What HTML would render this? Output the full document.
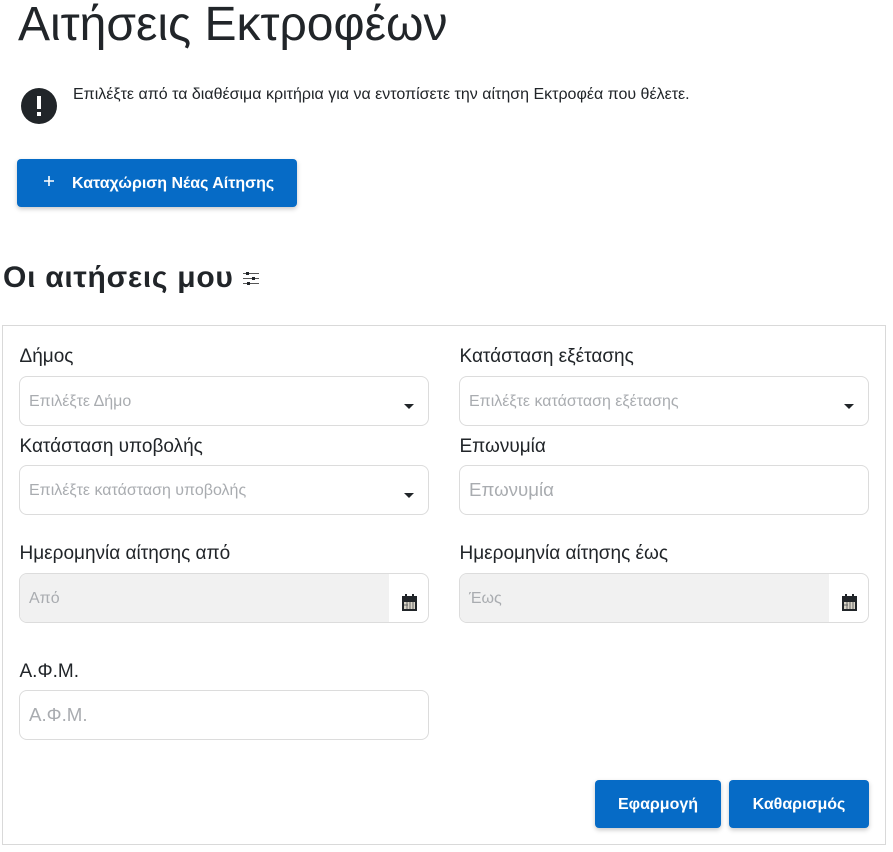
<!DOCTYPE html>
<html lang="el">
<head>
<meta charset="utf-8">
<style>
html,body{margin:0;padding:0;background:#fff;width:893px;height:852px;overflow:hidden}
body{position:relative;font-family:"Liberation Sans",sans-serif;color:#212529}
.a{position:absolute;white-space:nowrap}
.lbl{font-size:19px;line-height:22px;color:#212529;margin-top:1px}
.box{position:absolute;box-sizing:border-box;width:410px;height:50px;border:1px solid #dcdcdc;border-radius:8px;background:#fff;overflow:hidden}
.ph{position:absolute;white-space:nowrap;color:#a9acb0;line-height:20px}
.s{font-size:16px;top:15px}
.b{font-size:18.7px;top:14px}
.btn{position:absolute;background:#066bc6;border-radius:4px;color:#fff;font-weight:700;font-size:16px;text-align:center;box-shadow:0 2px 5px rgba(0,0,0,.22);height:48px;line-height:50px}
.car{position:absolute;width:0;height:0;border-left:5px solid transparent;border-right:5px solid transparent;border-top:5px solid #212529}
.gray{position:absolute;left:0;top:0;bottom:0;width:369px;background:#f1f1f1}
</style>
</head>
<body>
<div class="a" style="left:18px;top:-5px;font-size:48px;line-height:60px;color:#212529">Αιτήσεις Εκτροφέων</div>

<svg class="a" style="left:20px;top:87px" width="38" height="38" viewBox="0 0 38 38"><circle cx="19" cy="19" r="18" fill="#212529"/><rect x="17" y="9" width="4" height="13" fill="#fff"/><rect x="17" y="25" width="4" height="4" fill="#fff"/></svg>
<div class="a" style="left:73px;top:85px;font-size:16px;line-height:20px;color:#212529">Επιλέξτε από τα διαθέσιμα κριτήρια για να εντοπίσετε την αίτηση Εκτροφέα που θέλετε.</div>

<div class="btn" style="left:17px;top:159px;width:280px"></div>
<svg class="a" style="left:43px;top:175px" width="12" height="12" viewBox="0 0 12 12"><path d="M6 1v10M1 6h10" stroke="#fff" stroke-width="1.6" fill="none"/></svg>
<div class="a" style="left:72px;top:174px;font-size:16px;line-height:20px;font-weight:700;color:#fff">Καταχώριση Νέας Αίτησης</div>

<div class="a" style="left:3px;top:260px;font-size:30px;line-height:36px;font-weight:700;color:#212529;letter-spacing:.73px">Οι αιτήσεις μου</div>
<svg class="a" style="left:243px;top:272px" width="16" height="14" viewBox="0 0 16 14"><path d="M0 1.500h16M0 6.500h16M0 11.500h16" stroke="#555" stroke-width="1" fill="none"/><rect x="3" y="0" width="3" height="3" fill="#212529"/><rect x="9" y="5" width="3" height="3" fill="#212529"/><rect x="4" y="10" width="3" height="3" fill="#212529"/></svg>

<div style="position:absolute;left:2px;top:325px;width:884px;height:520px;box-sizing:border-box;border:1px solid #d9d9d9"></div>

<div class="a lbl" style="left:19.500px;top:345px">Δήμος</div>
<div class="box" style="left:19px;top:376px"><div class="ph s" style="left:9px">Επιλέξτε Δήμο</div><div class="car" style="left:384px;top:27px"></div></div>

<div class="a lbl" style="left:459.500px;top:345px">Κατάσταση εξέτασης</div>
<div class="box" style="left:459px;top:376px"><div class="ph s" style="left:9px">Επιλέξτε κατάσταση εξέτασης</div><div class="car" style="left:384px;top:27px"></div></div>

<div class="a lbl" style="left:19.500px;top:435px">Κατάσταση υποβολής</div>
<div class="box" style="left:19px;top:465px"><div class="ph s" style="left:9px">Επιλέξτε κατάσταση υποβολής</div><div class="car" style="left:384px;top:27px"></div></div>

<div class="a lbl" style="left:459.500px;top:435px">Επωνυμία</div>
<div class="box" style="left:459px;top:465px"><div class="ph b" style="left:9px">Επωνυμία</div></div>

<div class="a lbl" style="left:19.500px;top:542px">Ημερομηνία αίτησης από</div>
<div class="box" style="left:19px;top:573px"><div class="gray"></div><div class="ph s" style="left:9px">Από</div>
<svg style="position:absolute;left:382px;top:20px" width="15" height="17" viewBox="0 0 15 17"><rect x="0" y="2" width="15" height="15" fill="#212529"/><rect x="3" y="0" width="2" height="4" fill="#212529"/><rect x="10" y="0" width="2" height="4" fill="#212529"/><rect x="2" y="8" width="11" height="7" fill="#d8d4c8"/><path d="M5 8v7M8 8v7M11 8v7M2 11h4" stroke="#666" stroke-width="1"/></svg></div>

<div class="a lbl" style="left:459.500px;top:542px">Ημερομηνία αίτησης έως</div>
<div class="box" style="left:459px;top:573px"><div class="gray"></div><div class="ph s" style="left:9px">Έως</div>
<svg style="position:absolute;left:382px;top:20px" width="15" height="17" viewBox="0 0 15 17"><rect x="0" y="2" width="15" height="15" fill="#212529"/><rect x="3" y="0" width="2" height="4" fill="#212529"/><rect x="10" y="0" width="2" height="4" fill="#212529"/><rect x="2" y="8" width="11" height="7" fill="#d8d4c8"/><path d="M5 8v7M8 8v7M11 8v7M2 11h4" stroke="#666" stroke-width="1"/></svg></div>

<div class="a lbl" style="left:19.500px;top:660px">Α.Φ.Μ.</div>
<div class="box" style="left:19px;top:690px"><div class="ph b" style="left:9px">Α.Φ.Μ.</div></div>

<div class="btn" style="left:595px;top:780px;width:126px">Εφαρμογή</div>
<div class="btn" style="left:729px;top:780px;width:140px">Καθαρισμός</div>
</body>
</html>
